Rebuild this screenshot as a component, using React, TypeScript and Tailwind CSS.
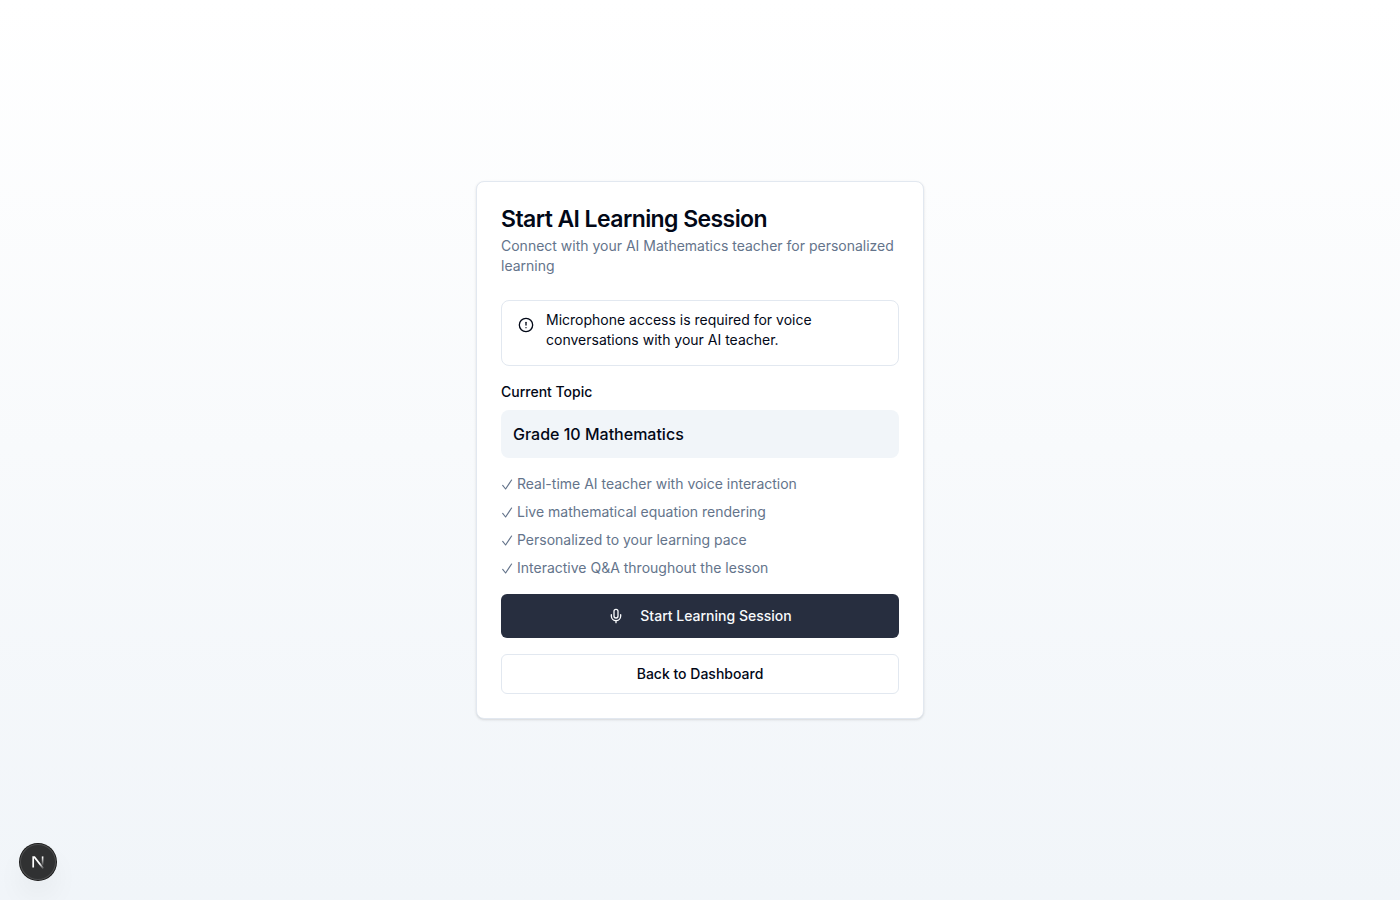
import { CircleAlert, Mic } from "lucide-react";

const features = [
  "Real-time AI teacher with voice interaction",
  "Live mathematical equation rendering",
  "Personalized to your learning pace",
  "Interactive Q&A throughout the lesson",
];

function CheckMark() {
  return (
    <svg viewBox="0 0 12 12" className="size-3 shrink-0" fill="none" stroke="currentColor" strokeWidth="1.15" strokeLinecap="round" strokeLinejoin="round" role="img" aria-label="Included">
      <path d="M1.7 7.4 4.6 11 10.6 2" />
    </svg>
  );
}

function DevToolsBadge() {
  return (
    <button
      type="button"
      aria-label="Open Next.js Dev Tools"
      className="fixed bottom-5 left-5 flex size-9 items-center justify-center rounded-full bg-[#303132] shadow-[0_0_0_1px_#171717,inset_0_0_0_1px_#4c4d4e,0_16px_32px_-8px_rgba(0,0,0,0.16)]"
    >
      <svg viewBox="0 0 14 14" className="size-3.5" fill="none" aria-hidden="true">
        <defs>
          <linearGradient id="n-diagonal" x1="8.5" y1="9" x2="13" y2="14" gradientUnits="userSpaceOnUse">
            <stop stopColor="#fff" />
            <stop offset="1" stopColor="#fff" stopOpacity="0" />
          </linearGradient>
          <linearGradient id="n-stem" x1="11.8" y1="2" x2="11.8" y2="11" gradientUnits="userSpaceOnUse">
            <stop stopColor="#fff" />
            <stop offset="1" stopColor="#fff" stopOpacity="0" />
          </linearGradient>
        </defs>
        <path d="M2.2 12.6V2.2h1.3l8.9 11.4" stroke="url(#n-diagonal)" strokeWidth="1.7" />
        <path d="M11.6 1.4v9" stroke="url(#n-stem)" strokeWidth="1.6" />
      </svg>
    </button>
  );
}

export default function App() {
  return (
    <div className="flex min-h-screen items-center justify-center bg-linear-to-b/srgb from-white to-slate-100 p-4 font-['Inter',sans-serif] text-[#020817]">
      <main className="w-full max-w-md rounded-lg border border-[#e2e8f0] bg-white shadow-sm">
        <header className="flex flex-col gap-1 p-6">
          <h1 className="text-[23px] leading-[26px] font-semibold tracking-tight">Start AI Learning Session</h1>
          <p className="text-sm text-[#64748b]">
            Connect with your AI Mathematics teacher for personalized learning
          </p>
        </header>

        <div className="flex flex-col gap-4 px-6 pb-6">
          <div role="alert" className="flex gap-3 rounded-lg border border-[#e2e8f0] px-4 pt-[9px] pb-[15px] text-sm">
            <CircleAlert className="mt-[7px] size-4 shrink-0" aria-hidden="true" />
            <p>Microphone access is required for voice conversations with your AI teacher.</p>
          </div>

          <section className="flex flex-col gap-2">
            <h2 className="text-sm font-medium">Current Topic</h2>
            <div className="rounded-lg bg-[#f1f5f9] p-3 font-medium">Grade 10 Mathematics</div>
          </section>

          <ul className="flex flex-col gap-2 text-sm text-[#64748b]">
            {features.map((feature) => (
              <li key={feature} className="flex items-center gap-1">
                <CheckMark />
                {feature}
              </li>
            ))}
          </ul>

          <button
            type="button"
            className="flex h-11 items-center justify-center gap-4 rounded-md bg-[#272e3f] px-8 text-sm font-medium text-[#f8fafc]"
          >
            <Mic className="size-4" aria-hidden="true" />
            Start Learning Session
          </button>
          <button
            type="button"
            className="flex h-10 items-center justify-center rounded-md border border-[#e2e8f0] bg-white px-4 text-sm font-medium"
          >
            Back to Dashboard
          </button>
        </div>
      </main>
      <DevToolsBadge />
    </div>
  );
}
